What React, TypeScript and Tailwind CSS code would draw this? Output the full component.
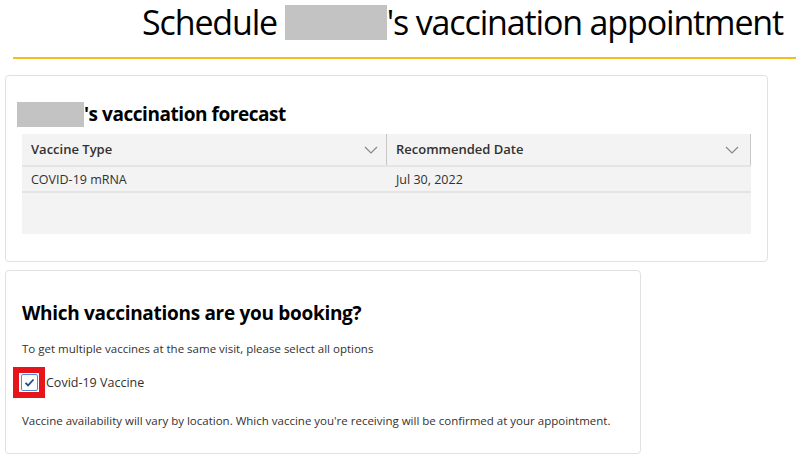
import React from 'react';

const Chevron = () => (
  <svg width="14" height="8" viewBox="0 0 14 8" fill="none">
    <path d="M1 1l6 6 6-6" stroke="#8a8886" strokeWidth="1.2" />
  </svg>
);

export default function App() {
  return (
    <div className="w-[796px] h-[460px] bg-white overflow-hidden font-['Open_Sans',sans-serif] text-black">
      {/* page title */}
      <div className="flex justify-end pr-[13px] h-[57px]">
        <h1 className="text-[34px] leading-[44px] tracking-[-1.15px] flex items-start">
          Schedule&nbsp;
          <span className="inline-block w-[102px] h-[35px] bg-[#c3c3c3] mt-[5px]" />
          's vaccination appointment
        </h1>
      </div>
      <div className="ml-[13px] h-[2px] bg-[#f8bb1c]" />

      {/* forecast card */}
      <div className="mt-[16px] ml-[5px] w-[763px] h-[187px] border border-[#e1e1e1] rounded-[4px]">
        <div className="ml-[11px] mt-[26px] flex items-center h-[25px]">
          <span className="inline-block w-[67px] h-[25px] bg-[#c3c3c3]" />
          <h2 className="text-[19px] font-bold leading-[25px] tracking-[-0.45px]">'s vaccination forecast</h2>
        </div>
        <div className="ml-[16px] mt-[7px] w-[729px] bg-[#f3f3f3] text-[#323130]">
          <div className="flex h-[33px] border-b-2 border-[#e4e4e4]">
            <div className="flex items-center justify-between w-[365px] pl-[9px] pr-[8px] border-r border-[#c8c6c4]">
              <span className="text-[13px] font-semibold">Vaccine Type</span>
              <Chevron />
            </div>
            <div className="flex items-center justify-between flex-1 pl-[9px] pr-[11px] border-r border-[#c8c6c4]">
              <span className="text-[13px] font-semibold">Recommended Date</span>
              <Chevron />
            </div>
          </div>
          <div className="flex h-[26px] items-center pt-[3px] border-b-2 border-[#e4e4e4] text-[12.5px]">
            <div className="w-[365px] pl-[9px]">COVID-19 mRNA</div>
            <div className="pl-[9px]">Jul 30, 2022</div>
          </div>
          <div className="h-[41px]" />
        </div>
      </div>

      {/* booking card */}
      <div className="mt-[8px] ml-[5px] w-[636px] h-[184px] border border-[#e1e1e1] rounded-[4px] px-[16px]">
        <h2 className="mt-[29px] text-[19px] font-bold leading-[26px] tracking-[-0.3px]">Which vaccinations are you booking?</h2>
        <p className="mt-[15px] text-[11.5px] leading-[16px] text-[#323130]">
          To get multiple vaccines at the same visit, please select all options
        </p>
        <div className="mt-[10px] -ml-[9px] flex items-center">
          <div className="w-[32px] h-[31px] border-[6px] border-[#e8141c] bg-white flex items-center justify-center">
            <div className="w-[17px] h-[17px] rounded-[2px] border border-[#4a8fd6] bg-white flex items-center justify-center">
              <svg width="11" height="9" viewBox="0 0 11 9" fill="none">
                <path d="M1.5 4.8l2.6 2.6L9.5 1.5" stroke="#1f4e8c" strokeWidth="1.8" />
              </svg>
            </div>
          </div>
          <span className="ml-[1px] mt-[2px] text-[12.5px] text-[#323130]">Covid-19 Vaccine</span>
        </div>
        <p className="mt-[15px] text-[11.5px] leading-[16px] text-[#323130]">
          Vaccine availability will vary by location. Which vaccine you're receiving will be confirmed at your appointment.
        </p>
      </div>
    </div>
  );
}
